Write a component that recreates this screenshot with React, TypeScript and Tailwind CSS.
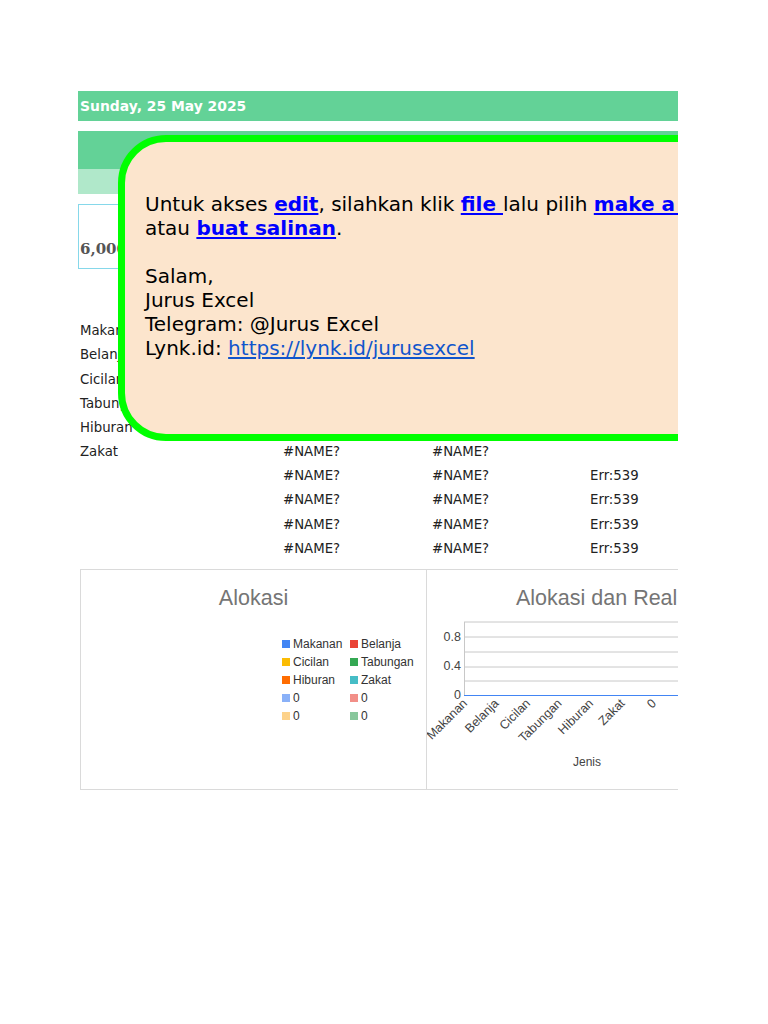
import type { ReactNode } from 'react';

type Row = {
  label: string;
  a: string;
  b: string;
  c: string;
};

// the first rows sit under the note box, so only their labels peek out
const rows: Row[] = [
  { label: 'Makanan', a: '', b: '', c: '' },
  { label: 'Belanja', a: '', b: '', c: '' },
  { label: 'Cicilan', a: '', b: '', c: '' },
  { label: 'Tabungan', a: '', b: '', c: '' },
  { label: 'Hiburan', a: '', b: '', c: '' },
  { label: 'Zakat', a: '#NAME?', b: '#NAME?', c: '' },
  { label: '', a: '#NAME?', b: '#NAME?', c: 'Err:539' },
  { label: '', a: '#NAME?', b: '#NAME?', c: 'Err:539' },
  { label: '', a: '#NAME?', b: '#NAME?', c: 'Err:539' },
  { label: '', a: '#NAME?', b: '#NAME?', c: 'Err:539' },
];

const legend = [
  { name: 'Makanan', color: '#4285f4' },
  { name: 'Belanja', color: '#ea4335' },
  { name: 'Cicilan', color: '#fbbc04' },
  { name: 'Tabungan', color: '#34a853' },
  { name: 'Hiburan', color: '#ff6d01' },
  { name: 'Zakat', color: '#46bdc6' },
  { name: '0', color: '#8ab1f8' },
  { name: '0', color: '#f28f88' },
  { name: '0', color: '#fdd28a' },
  { name: '0', color: '#88c79c' },
];

const categories = ['Makanan', 'Belanja', 'Cicilan', 'Tabungan', 'Hiburan', 'Zakat', '0', '0'];

function Link({ children, bold = true }: { children: ReactNode; bold?: boolean }) {
  return (
    <a
      href="#"
      className={
        bold
          ? 'font-bold text-[#0000ff] underline underline-offset-2'
          : 'text-[#1155cc] underline underline-offset-2'
      }
    >
      {children}
    </a>
  );
}

function BarChart() {
  const grid = [12, 27, 42, 57, 71];
  return (
    <svg width="251" height="180" className="block">
      {grid.map((y) => (
        <line key={y} x1="37" x2="260" y1={y} y2={y} stroke="#c8c8c8" strokeWidth="1" />
      ))}
      <line x1="37.5" x2="37.5" y1="12" y2="85" stroke="#c8c8c8" strokeWidth="1" />
      <line x1="37" x2="260" y1="85.5" y2="85.5" stroke="#4285f4" strokeWidth="1.2" />
      <g fontFamily="'Liberation Sans', Arial, sans-serif" fontSize="12.5" fill="#444">
        <text x="34" y="31" textAnchor="end">0.8</text>
        <text x="34" y="60" textAnchor="end">0.4</text>
        <text x="34" y="89" textAnchor="end">0</text>
        {categories.map((c, i) => {
          const x = 41 + i * 31.5;
          const y = 94;
          return (
            <text key={i} x={x} y={y} textAnchor="end" transform={`rotate(-45 ${x} ${y})`}>
              {c}
            </text>
          );
        })}
        <text x="160" y="156" textAnchor="middle" fontSize="12">Jenis</text>
      </g>
    </svg>
  );
}

export default function App() {
  return (
    <div className="relative w-[768px] h-[1024px] bg-white font-['DejaVu_Sans',sans-serif]">
      <div className="relative ml-[78px] pt-[91px] w-[600px] overflow-hidden">
        {/* header bands */}
        <div className="h-[30px] bg-[#63d297] flex items-center px-[2px] text-[13.9px] font-bold text-white">
          Sunday, 25 May 2025
        </div>
        <div className="mt-[10px] h-[38px] bg-[#63d297]" />
        <div className="h-[25px] bg-[#b0e8ca]" />

        {/* total cell */}
        <div className="mt-[10px] h-[65px] w-[260px] border border-[#86d8ea] pt-[33px] pl-px font-['DejaVu_Serif',serif] text-[15px] font-bold text-[#555]">
          6,000,000
        </div>

        {/* table */}
        <div className="mt-[50px] text-[13.3px] text-[#222]">
          {rows.map((r, i) => (
            <div key={i} className="grid grid-cols-[205px_149px_158px_88px] h-[24.2px] items-center">
              <div className="pl-[2px]">{r.label}</div>
              <div>{r.a}</div>
              <div>{r.b}</div>
              <div>{r.c}</div>
            </div>
          ))}
        </div>

        {/* charts */}
        <div className="mt-[8px] ml-[2px] h-[221px] flex border border-[#dadada] border-r-0 font-['Liberation_Sans',Arial,sans-serif]">
          <div className="w-[346px] shrink-0 border-r border-[#dadada] flex flex-col">
            <div className="pt-[16px] text-center text-[21.5px] leading-[24px] text-[#757575]">Alokasi</div>
            <div className="mt-[27px] ml-[201px] grid grid-cols-[68px_70px] gap-y-[4px] text-[12px] leading-[14px] text-[#333]">
              {legend.map((l, i) => (
                <div key={i} className="flex items-center gap-[3px]">
                  <span className="w-[8px] h-[8px] shrink-0" style={{ backgroundColor: l.color }} />
                  <span>{l.name}</span>
                </div>
              ))}
            </div>
          </div>
          <div className="flex-1 min-w-0 flex flex-col overflow-hidden">
            <div className="pt-[16px] pl-[89px] text-[21.5px] leading-[24px] text-[#757575] whitespace-nowrap">
              Alokasi dan Realisasi
            </div>
            <BarChart />
          </div>
        </div>

        {/* note box over the sheet */}
        <div className="absolute left-[40px] top-[135px] w-[700px] h-[306px] rounded-[48px] border-[7px] border-[#00ff00] bg-[#fce5cd] pt-[50px] pl-[20px] text-[20px] leading-[24px] text-black">
          <div className="whitespace-nowrap">
            Untuk akses <Link>edit</Link>, silahkan klik <Link>file </Link>lalu pilih <Link>make a copy</Link>
          </div>
          <div>
            atau <Link>buat salinan</Link>.
          </div>
          <div className="h-[24px]" />
          <div>Salam,</div>
          <div>Jurus Excel</div>
          <div>Telegram: @Jurus Excel</div>
          <div>
            Lynk.id: <Link bold={false}>https://lynk.id/jurusexcel</Link>
          </div>
        </div>
      </div>
    </div>
  );
}
